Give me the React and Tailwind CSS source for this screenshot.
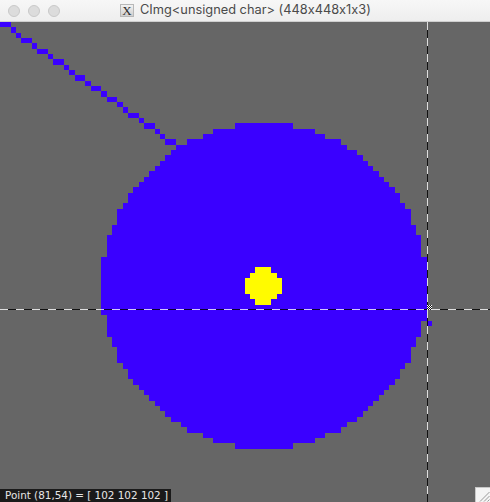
import React from "react";

function circleSpans(r) {
  const m = {};
  const set = (dx, dy) => {
    m[dy] = Math.max(m[dy] ?? -1, dx);
  };
  let x = 0;
  let y = r;
  let d = 1 - r;
  while (x <= y) {
    set(x, y);
    set(x, -y);
    set(y, x);
    set(y, -x);
    if (d < 0) d += 2 * x + 3;
    else {
      d += 2 * (x - y) + 5;
      y--;
    }
    x++;
  }
  return m;
}

const LINE_W = [2, 1, 1, 2, 1, 2, 1, 2, 1, 1, 2, 1, 2, 1, 2, 1, 1, 2, 1, 2, 1, 1, 2, 1, 2];

function PixelArt() {
  const blue = "#3a00ff";
  const yellow = "#fffb00";
  const cx = 49;
  const cy = 49;
  const big = circleSpans(30);
  const small = circleSpans(3);
  const lineRects = [];
  let start = 0;
  LINE_W.forEach((w, row) => {
    lineRects.push(<rect key={"l" + row} x={start} y={row} width={w} height={1} fill={blue} />);
    start += w;
  });
  const circleRects = Object.entries(big).map(([dy, h]) => (
    <rect key={"c" + dy} x={cx - h} y={cy + Number(dy)} width={2 * h + 1} height={1} fill={blue} />
  ));
  const dotRects = Object.entries(small).map(([dy, h]) => (
    <rect key={"d" + dy} x={cx - h - 0.15} y={cy + Number(dy)} width={2 * h + 1} height={1} fill={yellow} />
  ));
  return (
    <svg
      className="absolute inset-0"
      width="490"
      height="480"
      viewBox="0 0 91.875 90"
      preserveAspectRatio="none"
      shapeRendering="crispEdges"
    >
      {lineRects}
      {circleRects}
      <rect x={79} y={55} width={1} height={1} fill={blue} />
      <rect x={80} y={56} width={1} height={1} fill={blue} />
      {dotRects}
    </svg>
  );
}

function Crosshair() {
  const checks = [];
  for (let i = 0; i < 5; i++) {
    for (let j = 0; j < 5; j++) {
      checks.push(
        <rect
          key={i + "-" + j}
          x={427 + i}
          y={283 + j}
          width={1}
          height={1}
          fill={(i + j) % 2 === 0 ? "#ffffff" : "#111111"}
        />
      );
    }
  }
  return (
    <svg className="absolute inset-0" width="490" height="480" viewBox="0 0 490 480" shapeRendering="crispEdges">
      <line x1="427.5" y1="0" x2="427.5" y2="480" stroke="#ffffff" strokeOpacity="0.78" strokeDasharray="8 8" />
      <line x1="427.5" y1="8" x2="427.5" y2="480" stroke="#000000" strokeOpacity="0.82" strokeDasharray="8 8" />
      <line x1="0" y1="287.5" x2="490" y2="287.5" stroke="#ffffff" strokeOpacity="0.78" strokeDasharray="8 8" />
      <line x1="8" y1="287.5" x2="490" y2="287.5" stroke="#000000" strokeOpacity="0.82" strokeDasharray="8 8" />
      {checks}
    </svg>
  );
}

function ResizeGrip() {
  return (
    <svg className="absolute bottom-0 right-0" width="15" height="15" viewBox="0 0 15 15">
      <rect x="0" y="0" width="15" height="15" fill="#f4f4f4" />
      <line x1="0.5" y1="0" x2="0.5" y2="15" stroke="#c8c8c8" />
      <line x1="0" y1="0.5" x2="15" y2="0.5" stroke="#c8c8c8" />
      <line x1="5" y1="14.5" x2="14.5" y2="5" stroke="#8e8e8e" strokeWidth="0.9" />
      <line x1="9" y1="14.5" x2="14.5" y2="9" stroke="#8e8e8e" strokeWidth="0.9" />
      <line x1="12.5" y1="14.5" x2="14.5" y2="12.5" stroke="#8e8e8e" strokeWidth="0.9" />
    </svg>
  );
}

export default function App() {
  return (
    <div className="w-[490px] h-[502px] flex flex-col overflow-hidden bg-[#666666]">
      <div className="h-[22px] shrink-0 relative flex items-center bg-gradient-to-b from-[#f7f7f7] to-[#eeeeee] border-b border-[#cfcfcf]">
        <div className="flex items-center gap-[8px] pl-[8px]">
          <span className="w-[12px] h-[12px] rounded-full bg-[#dcdcdc] border border-[#c9c9c9]" />
          <span className="w-[12px] h-[12px] rounded-full bg-[#dcdcdc] border border-[#c9c9c9]" />
          <span className="w-[12px] h-[12px] rounded-full bg-[#dcdcdc] border border-[#c9c9c9]" />
        </div>
        <div className="flex items-center ml-[60px] gap-[6px]">
          <span
            className="w-[14px] h-[13px] flex items-center justify-center border border-[#b8b8b8] bg-gradient-to-b from-[#f2f2f2] to-[#cfcfcf] text-[#2e2e2e] text-[13px] leading-none"
            style={{ fontFamily: '"Liberation Serif", serif' }}
          >
            X
          </span>
          <span
            className="text-[12.8px] text-[#4a4a4a] whitespace-nowrap leading-none [font-feature-settings:'calt'_0]"
            style={{ fontFamily: 'Inter, "Liberation Sans", sans-serif' }}
          >
            CImg&lt;unsigned char&gt; (448x448x1x3)
          </span>
        </div>
      </div>
      <div className="relative flex-1">
        <PixelArt />
        <Crosshair />
        <div
          className="absolute bottom-0 left-0 h-[13px] w-[171px] bg-[#1a1a1a] pl-[5px] text-[10.4px] leading-[13px] text-[#e6e6e6] whitespace-nowrap"
          style={{ fontFamily: '"DejaVu Sans", sans-serif' }}
        >
          Point (81,54) = [ 102 102 102 ]
        </div>
        <ResizeGrip />
      </div>
    </div>
  );
}
